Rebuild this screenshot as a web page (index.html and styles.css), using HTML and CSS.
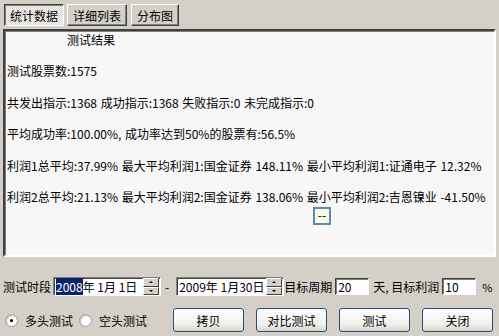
FILE: index.html
```html
<!DOCTYPE html>
<html lang="zh-CN">

<head>
    <meta charset="UTF-8">
    <title>测试结果</title>
    <link rel="stylesheet" href="styles.css">
</head>

<body>
    <div class="dialog">
        <div class="tabs">
            <button class="tab tab-active">统计数据</button>
            <button class="tab">详细列表</button>
            <button class="tab tab-small">分布图</button>
        </div>

        <div class="result">
            <p class="title">测试结果</p>
            <p>测试股票数:1575</p>
            <p>共发出指示:1368 成功指示:1368 失败指示:0 未完成指示:0</p>
            <p>平均成功率:100.00%, 成功率达到50%的股票有:56.5%</p>
            <p>利润1总平均:37.99% 最大平均利润1:国金证券 148.11% 最小平均利润1:证通电子 12.32%</p>
            <p>利润2总平均:21.13% 最大平均利润2:国金证券 138.06% 最小平均利润2:吉恩镍业 -41.50%</p>
            <span class="tip">--</span>
        </div>

        <div class="params">
            <span class="label">测试时段</span>
            <div class="date">
                <span class="date-text"><span class="sel">2008</span>年 1月 1日</span>
                <div class="spin">
                    <span class="spin-btn up"></span>
                    <span class="spin-btn down"></span>
                </div>
            </div>
            <span class="dash">-</span>
            <div class="date">
                <span class="date-text">2009年 1月30日</span>
                <div class="spin">
                    <span class="spin-btn up"></span>
                    <span class="spin-btn down"></span>
                </div>
            </div>
            <span class="label">目标周期</span>
            <input class="num" type="text" value="20">
            <span class="label gap-left">天, 目标利润</span>
            <input class="num" type="text" value="10">
            <span class="pct">%</span>
        </div>

        <div class="actions">
            <label class="radio"><span class="dot checked"></span>多头测试</label>
            <label class="radio"><span class="dot"></span>空头测试</label>
            <button class="btn btn-first">拷贝</button>
            <button class="btn">对比测试</button>
            <button class="btn">测试</button>
            <button class="btn">关闭</button>
        </div>
    </div>
</body>

</html>
```

FILE: styles.css
```css
/* General Styles */
body {
    margin: 0;
    font-family: 'Noto Sans CJK SC', 'DejaVu Sans', sans-serif;
    font-size: 12px;
    background-color: #d4d0c8;
    color: #000;
}

.dialog {
    width: 499px;
    height: 336px;
    overflow: hidden;
}

/* Tabs */
.tabs {
    display: flex;
    gap: 3px;
    padding: 4px 0 0 4px;
    height: 22px;
}

.tab {
    width: 60px;
    height: 22px;
    padding: 0;
    font-family: inherit;
    font-size: 12px;
    background-color: #d4d0c8;
    border: 1px solid;
    border-color: #fff #404040 #404040 #fff;
    box-shadow: inset -1px -1px 0 #808080;
}

.tab-active {
    border-color: #404040 #fff #fff #404040;
    box-shadow: inset 1px 1px 0 #808080;
    background-color: #e6e4df;
    background-image: repeating-conic-gradient(#fff 0 25%, #d4d0c8 0 50%);
    background-size: 2px 2px;
}

.tab-small {
    width: 48px;
    margin-left: 1px;
}

/* Result area */
.result {
    position: relative;
    margin: 3px 3px 0 3px;
    height: 224px;
    padding: 0 2px;
    background-color: #f7f7f7;
    border: 2px solid;
    border-color: #404040 #fff #fff #404040;
    box-shadow: inset 1px 1px 0 #808080;
}

.result p {
    margin: 0;
    line-height: 31.5px;
    white-space: nowrap;
    word-spacing: 1px;
}

.result .title {
    line-height: 18px;
    padding-left: 60px;
    margin-bottom: 6px;
}

.tip {
    position: absolute;
    left: 308px;
    top: 176px;
    width: 14px;
    height: 14px;
    line-height: 12px;
    text-align: center;
    background-color: #fafae6;
    border: 2px solid #5b8bb3;
}

/* Parameter row */
.params {
    display: flex;
    align-items: center;
    height: 21px;
    margin-top: 19px;
    padding-left: 3px;
}

.label {
    white-space: nowrap;
}

.gap-left {
    margin-left: 4px;
}

.date {
    display: flex;
    align-items: center;
    width: 104px;
    height: 17px;
    margin-left: 2px;
    padding-left: 2px;
    background-color: #fff;
    border: 1px solid;
    border-color: #808080 #fff #fff #808080;
    box-shadow: inset 1px 1px 0 #404040, 1px 1px 0 #d4d0c8;
}

.date-text {
    flex: 1;
    white-space: nowrap;
}

.sel {
    background-color: #0a246a;
    color: #fff;
}

.spin {
    display: flex;
    flex-direction: column;
    width: 16px;
    height: 17px;
    margin-right: 1px;
}

.spin-btn {
    position: relative;
    height: 8px;
    background-color: #d4d0c8;
    border: 1px solid;
    border-color: #fff #404040 #404040 #fff;
    box-sizing: border-box;
    flex: 1;
}

.spin-btn::after {
    content: "";
    position: absolute;
    left: 5px;
    width: 0;
    height: 0;
    border-left: 2px solid transparent;
    border-right: 2px solid transparent;
}

.up::after {
    top: 2px;
    border-bottom: 2px solid #000;
}

.down::after {
    top: 2px;
    border-top: 2px solid #000;
}

.dash {
    margin: 0 5px 0 4px;
}

.num {
    width: 28px;
    height: 15px;
    padding: 0 2px;
    margin: 0 0 0 3px;
    font-family: inherit;
    font-size: 12px;
    background-color: #fff;
    border: 1px solid;
    border-color: #404040 #fff #fff #404040;
    box-shadow: inset 1px 1px 0 #808080;
}

.pct {
    margin-left: 6px;
    font-size: 11px;
}

/* Action row */
.actions {
    display: flex;
    align-items: center;
    height: 24px;
    margin-top: 11px;
    padding-left: 5px;
}

.radio {
    display: flex;
    align-items: center;
    gap: 7px;
    margin-right: 6px;
    white-space: nowrap;
}

.dot {
    position: relative;
    width: 11px;
    height: 11px;
    border-radius: 50%;
    background-color: #fff;
    border: 1px solid #a0a0a0;
    box-shadow: inset 1px 1px 1px #bbb;
}

.dot.checked::after {
    content: "";
    position: absolute;
    left: 4px;
    top: 4px;
    width: 3px;
    height: 3px;
    border-radius: 50%;
    background-color: #000;
}

.btn {
    width: 71px;
    height: 24px;
    margin-left: 12px;
    padding: 0;
    font-family: inherit;
    font-size: 12px;
    color: #000;
    border: 1px solid #2a4f7c;
    border-radius: 3px;
    background: linear-gradient(#ffffff, #f0efea 70%, #d8d6cc);
}

.btn-first {
    margin-left: 20px;
}
```
